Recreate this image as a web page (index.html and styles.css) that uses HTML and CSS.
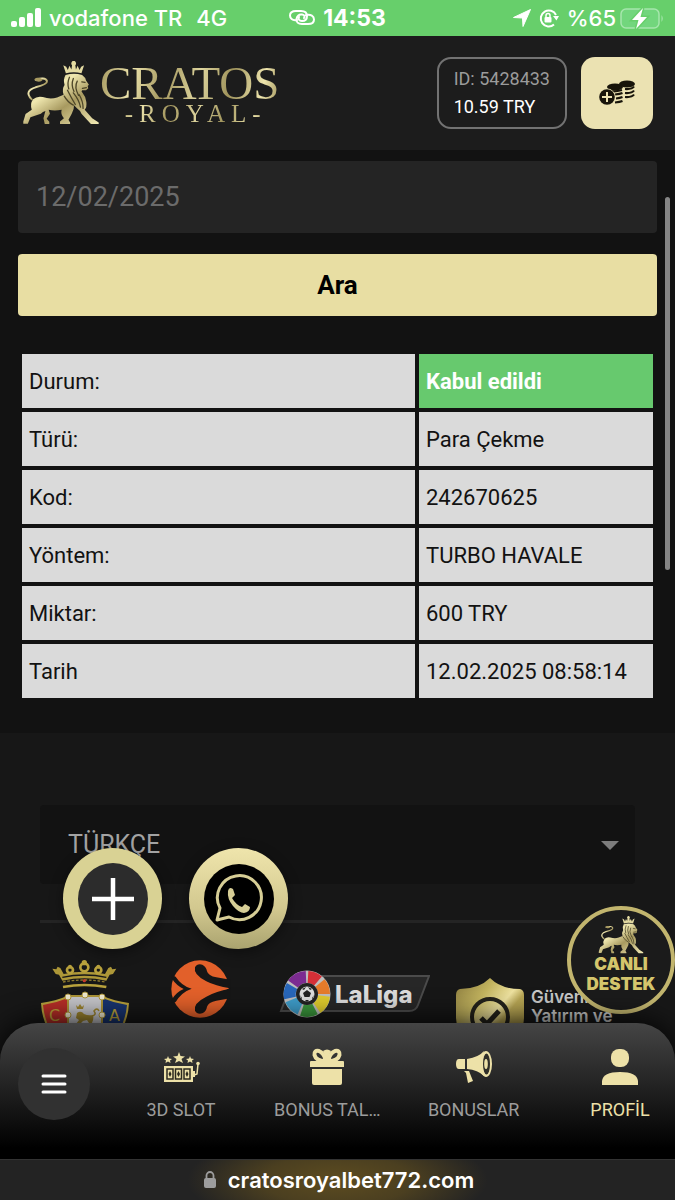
FILE: index.html
```html
<!DOCTYPE html>
<html lang="tr">
<head>
  <meta charset="UTF-8">
  <meta name="viewport" content="width=device-width, initial-scale=1.0">
  <title>Cratos Royal</title>
  <link rel="stylesheet" href="styles.css">
</head>
<body>

<!-- Shared drawings -->
<svg class="defs" width="0" height="0" aria-hidden="true">
  <defs>
    <linearGradient id="gold" x1="0" y1="0" x2="1" y2="1">
      <stop offset="0" stop-color="#8f8350"/>
      <stop offset="0.35" stop-color="#f0e8b0"/>
      <stop offset="0.6" stop-color="#a89a60"/>
      <stop offset="1" stop-color="#f2eab4"/>
    </linearGradient>
    <linearGradient id="shieldGold" x1="0" y1="0" x2="1" y2="1">
      <stop offset="0" stop-color="#85763b"/>
      <stop offset="0.3" stop-color="#c3b45f"/>
      <stop offset="0.5" stop-color="#eee2a0"/>
      <stop offset="0.6" stop-color="#b8a654"/>
      <stop offset="1" stop-color="#99873d"/>
    </linearGradient>
    <symbol id="lion" viewBox="20 15 240 195">
      <path d="M50 132C30 112 42 101 62 95C86 89 98 84 97 76C94 66 78 66 62 72" fill="none" stroke="url(#gold)" stroke-width="6" stroke-linecap="round"/>
      <path d="M58 70C66 62 80 66 84 72C78 80 64 80 58 70Z" fill="#a89a60"/>
      <path d="M147 27L155 52Q180 46 203 52L211 27L202 32L197 42L191 29L186 40L184 27A7 8 0 1 0 174 27L172 40L166 29L161 42L156 32Z" fill="#e4dba2"/>
      <path d="M154 57Q180 49 205 57Q215 64 217 74L226 87L222 91L224 98L217 104L205 104Q201 108 206 112Q217 125 218 140Q220 156 213 164L236 190L256 203V208H232L203 176Q198 165 190 160L180 150Q181 162 173 176L163 195L168 203V208H137V200L149 190Q138 178 142 164Q120 168 102 164L106 176L96 192L104 201V208H90L86 190L92 168Q84 170 78 176L46 187L38 207H24V200L31 177L50 164Q44 146 54 132Q66 121 84 125Q108 133 128 126L148 118Q142 100 151 88Q146 70 154 57Z" fill="url(#gold)"/>
      <path d="M166 64Q158 82 164 100M178 68Q170 88 180 108M190 76Q180 94 194 120M160 104Q172 128 184 148M178 112Q196 134 200 156M196 118Q208 138 208 160M204 78L214 80M206 98L218 96M150 122Q160 140 178 150" fill="none" stroke="#4d4628" stroke-width="4" stroke-linecap="round"/>
    </symbol>
  </defs>
</svg>

<div class="phone">

  <div class="status-bar">
    <div class="status-left">
      <svg width="30" height="20" viewBox="0 0 30 20" fill="#fff">
        <rect x="0" y="13" width="6" height="6" rx="2"/><rect x="8" y="9" width="6" height="10" rx="2"/>
        <rect x="16" y="5" width="6" height="14" rx="2"/><rect x="24" y="0" width="6" height="19" rx="2"/>
      </svg>
      <span>vodafone TR</span>
      <span class="network">4G</span>
    </div>
    <div class="status-time">
      <svg width="26" height="18" viewBox="0 0 26 18" fill="none" stroke="#fff" stroke-width="2" stroke-linecap="round">
        <path d="M8 11C3 12 1 9 1 6.500C1 3 4 2 7 2H12C16 2 18 4 18 7C18 10 16 12 13 12C10 12 9 10 10 8"/>
        <path d="M17 6C22 5 25 7 25 10.500C25 14 22 15 19 15H13C9 15 7 13 7.500 10C8 7 10 5 13 5.500C16 6 16 8 15 9"/>
      </svg>
      <span>14:53</span>
    </div>
    <div class="status-right">
      <svg width="18" height="18" viewBox="0 0 18 18" fill="#fff"><path d="M17.500.5L10 17.500L9.500 9L.5 8.500Z" stroke="#fff" stroke-linejoin="round"/></svg>
      <svg width="20" height="20" viewBox="0 0 20 20" fill="none" stroke="#fff" stroke-width="2">
        <path d="M15 16.500A8 8 0 1 1 17 7"/><path d="M14 8H20L17.500 12.500Z" fill="#fff" stroke="none"/>
        <rect x="5.500" y="9" width="7" height="5.500" rx="1" fill="#fff" stroke="none"/><path d="M7 9V7.500A2 2 0 0 1 11 7.500V9" stroke-width="1.500"/>
      </svg>
      <span>%65</span>
      <svg class="battery" width="44" height="24" viewBox="0 0 44 24">
        <rect x="1" y="3" width="38" height="19" rx="5" fill="#72d67d" stroke="#a6e6ad" stroke-width="1.500"/>
        <path d="M41.500 9Q44 12.500 41.500 16Z" fill="#a6e6ad"/>
        <path d="M23 2L12 14H18.500L16 23L27 11H20.500Z" fill="#fff" stroke="#67cf6b" stroke-width="3" paint-order="stroke"/>
      </svg>
    </div>
  </div>

  <header class="header">
    <a class="logo" href="#">
      <svg class="logo-lion" width="78" height="64"><use href="#lion"/></svg>
      <span class="logo-text">
        <span class="logo-name">CRATOS</span>
        <span class="logo-sub">-ROYAL-</span>
      </span>
    </a>
    <div class="account">
      <a class="balance" href="#">
        <span class="balance-id">ID: 5428433</span>
        <span>10.59 TRY</span>
      </a>
      <button class="deposit" aria-label="Para yatır">
        <svg width="36" height="26" viewBox="0 0 36 26">
          <g fill="#17140a">
            <ellipse cx="28" cy="4" rx="8" ry="3.500"/><ellipse cx="16" cy="7" rx="8" ry="3.500"/>
          </g>
          <g fill="none" stroke="#17140a" stroke-width="2.200">
            <path d="M35 6.500Q33 9.500 26 9M35 10.500Q33 13.500 26 13M35 14.500Q33 17.500 26 17"/>
            <path d="M8.500 9Q12 13 23 10M16 14.500Q21 14 23.500 13M17 18.500Q21 18 23.500 17M16 22.500Q21 22 23.500 21"/>
          </g>
          <circle cx="8" cy="17" r="8.500" fill="#ebe2b2"/><circle cx="8" cy="17" r="7.800" fill="#17140a"/>
          <path d="M8 12V22M3 17H13" stroke="#ebe2b2" stroke-width="2"/>
        </svg>
      </button>
    </div>
  </header>

  <main class="content">
    <section class="history">
      <input class="date-input" type="text" value="12/02/2025" aria-label="Tarih">
      <button class="search-button">Ara</button>
      <table class="details">
        <tr><th scope="row">Durum:</th><td class="accepted">Kabul edildi</td></tr>
        <tr><th scope="row">Türü:</th><td>Para Çekme</td></tr>
        <tr><th scope="row">Kod:</th><td>242670625</td></tr>
        <tr><th scope="row">Yöntem:</th><td>TURBO HAVALE</td></tr>
        <tr><th scope="row">Miktar:</th><td>600 TRY</td></tr>
        <tr><th scope="row">Tarih</th><td>12.02.2025 08:58:14</td></tr>
      </table>
    </section>

    <footer class="footer">
      <div class="select-wrap">
        <select class="language" aria-label="Dil">
          <option>TÜRKÇE</option>
        </select>
        <svg class="select-arrow" width="18" height="9" viewBox="0 0 18 9"><path d="M0 0H18L9 9Z" fill="#7c7c7c"/></svg>
      </div>
      <div class="partners">
        <svg width="90" height="90" viewBox="0 0 90 90">
          <g transform="translate(-5 -6) scale(0.3333)">
            <path d="M52 44L64 46L68 38L76 42L86 60Q148 46 210 60L220 42L228 38L232 46L244 44L234 60L224 62L214 80Q148 66 82 80L72 62L62 60Z" fill="#ad9738"/>
            <g fill="#171717" stroke="#b8a13c" stroke-width="8">
              <circle cx="148" cy="40" r="12"/><circle cx="105" cy="48" r="9"/><circle cx="190" cy="48" r="9"/>
            </g>
            <g fill="#b8a13c"><circle cx="148" cy="26" r="8"/><circle cx="105" cy="38" r="6"/><circle cx="190" cy="38" r="6"/></g>
            <path d="M82 70Q148 56 214 70" stroke="#171717" stroke-width="4" fill="none"/>
            <path d="M84 84Q148 72 212 84" stroke="#8d7a2e" stroke-width="4" stroke-dasharray="8 5" fill="none"/>
            <path d="M84 99Q148 87 214 99" stroke="#b8a13c" stroke-width="8" fill="none"/>
            <circle cx="148" cy="80" r="5" fill="#c53a2c"/>
          </g>
          <path d="M1 43Q16 41 27 36H63Q74 41 89 43Q88 66 72 84L45 90L18 84Q2 66 1 43Z" fill="#b8a13c"/>
          <path d="M3 45Q16 43 28 38V86L20 83Q5 67 3 45Z" fill="#b72e27"/>
          <path d="M87 45Q74 43 62 38V86L70 83Q85 67 87 45Z" fill="#18346f"/>
          <rect x="28" y="36" width="34" height="52" fill="#c5c5c9"/>
          <path d="M36 45L38 47L40 44L42 47L44 45L43 49H37Z" fill="#9c842e"/>
          <path d="M37 53Q41 50 44 54Q48 56 53 55Q54 59 52 63H49L47 60L43 61L40 64H36L39 60L36 58Z" fill="#9c842e"/>
          <path d="M52 56Q57 55 54 51Q57 47 59 51" stroke="#9c842e" stroke-width="1.500" fill="none"/>
          <path d="M28 36H62V88M28 36V88" fill="none" stroke="#ac9437" stroke-width="2"/>
          <g fill="#eee8cf" stroke="#ae963b"><circle cx="28" cy="37" r="3"/><circle cx="45" cy="35" r="3"/><circle cx="62" cy="37" r="3"/><circle cx="28" cy="55" r="3"/><circle cx="62" cy="55" r="3"/></g>
          <text class="crest-letter" x="9" y="61">C</text><text class="crest-letter" x="69" y="61">A</text>
        </svg>

        <svg width="88" height="58" viewBox="-23 16 264 174">
          <circle cx="109" cy="103" r="86" fill="#e2602a"/>
          <path id="swoosh" d="M94 38Q100 26 116 30Q128 36 130 50Q134 64 158 68L200 75V101Q154 94 128 80Q88 60 94 38Z" fill="#161616"/>
          <path d="M94 168Q100 180 116 176Q128 170 130 156Q134 142 158 138L200 131V101Q154 112 128 126Q88 146 94 168Z" fill="#161616"/>
          <path d="M22 60L36 66Q54 94 84 102Q54 112 36 142L22 146L25 134Q38 112 60 103Q38 92 25 72Z" fill="#161616"/>
          <path d="M150 94L196 102L150 110Z" fill="#e2602a"/>
        </svg>

        <svg width="160" height="58" viewBox="-10 -11 160 58">
          <path d="M20 5H149L138 34Q136 40 129 40H1L4 32Z" fill="#272727" stroke="#4b4b4b" stroke-width="2"/>
          <circle cx="27" cy="23" r="23.500" fill="#bdbdbd"/>
          <g fill="none" stroke-width="12">
            <path d="M28 6A17 17 0 0 1 38 10" stroke="#d52f37"/>
            <path d="M40 12A17 17 0 0 1 44 23" stroke="#e57b2a"/>
            <path d="M44 25A17 17 0 0 1 37 37" stroke="#dfcb2d"/>
            <path d="M35 38A17 17 0 0 1 22 39" stroke="#3a963c"/>
            <path d="M20 38A17 17 0 0 1 11 29" stroke="#3e9cc9"/>
            <path d="M10 27A17 17 0 0 1 12 15" stroke="#2866b9"/>
            <path d="M13 13A17 17 0 0 1 26 6" stroke="#7c2b91"/>
          </g>
          <circle cx="27" cy="23" r="11" fill="#222"/><circle cx="27" cy="23" r="7.500" fill="#dcdcdc"/>
          <path d="M27 19L31 22L29.500 26H24.500L23 22ZM22 18L26 16L24 19ZM32 18L28 16L30 19ZM20 24L22 27L22 29ZM34 24L32 27V29ZM25 29H29L27 31Z" fill="#222"/>
          <text class="laliga-text" x="55" y="32">LaLiga</text>
        </svg>

        <div class="secure">
          <svg width="68" height="80" viewBox="0 0 68 80">
            <path d="M34 0Q45 11 64 11Q68 12 68 17V40Q67 65 34 80Q1 65 0 40V17Q0 12 4 11Q23 11 34 0Z" fill="url(#shieldGold)"/>
            <circle cx="34" cy="39" r="18" fill="none" stroke="#24221b" stroke-width="4"/>
            <path d="M25 40L31 46L43 33" fill="none" stroke="#24221b" stroke-width="5"/>
          </svg>
          <span>Güvenli<br>Yatırım ve</span>
        </div>
      </div>
    </footer>
  </main>

  <div class="scroll-thumb"></div>

  <div class="float-buttons">
    <button class="float-button" aria-label="Ekle">
      <svg width="70" height="72" viewBox="0 0 70 72">
        <ellipse cx="35" cy="36" rx="35" ry="36" fill="#2c2c2c"/>
        <path d="M35 15V57M14 36H56" stroke="#fff" stroke-width="4.500"/>
      </svg>
    </button>
    <button class="float-button whatsapp" aria-label="WhatsApp">
      <svg width="70" height="72" viewBox="0 0 70 72">
        <ellipse cx="35" cy="36" rx="35" ry="35" fill="#000"/>
        <path d="M13 57L16 45A22 22 0 1 1 25 54Z" fill="none" stroke="#d7ce96" stroke-width="3" stroke-linejoin="round"/>
        <path d="M24 28Q25 23 29 26L31 32L28 35Q32 42 38 44L41 41L46 44Q46 49 40 50Q35 50 29 43Q23 36 24 28Z" fill="#d7ce96"/>
      </svg>
    </button>
  </div>

  <button class="support">
    <svg width="46" height="38"><use href="#lion"/></svg>
    <span>CANLI<br>DESTEK</span>
  </button>

  <nav class="bottom-nav">
    <button class="menu-button" aria-label="Menü">
      <svg width="26" height="20" viewBox="0 0 26 20"><path d="M2 2H24M2 10H24M2 18H24" stroke="#fff" stroke-width="3" stroke-linecap="round"/></svg>
    </button>
    <div class="nav-items">
      <a class="nav-item" href="#">
        <svg width="38" height="38" viewBox="0 0 38 38" fill="#ede1a8">
          <path d="M17 4L18.500 8L23 8.500L19.500 11L21 15L17 13L13 15L14.500 11L11 8.500L15.500 8Z"/>
          <path d="M6 8L7 10.500L10 11L8 12.500L8.500 15L6 13.500L3.500 15L4 12.500L2 11L5 10.500ZM28 8L29 10.500L32 11L30 12.500L30.500 15L28 13.500L25.500 15L26 12.500L24 11L27 10.500Z"/>
          <path d="M2 18H31V34H2ZM31 23H33V29H31Z"/>
          <path d="M32 27L35 26L36 16" fill="none" stroke="#ede1a8" stroke-width="1.500"/>
          <circle cx="36" cy="15.500" r="1.800"/>
          <g fill="none" stroke="#2b291f" stroke-width="1.500"><rect x="5" y="21" width="6" height="10"/><rect x="13.500" y="21" width="6" height="10"/><rect x="22" y="21" width="6" height="10"/></g>
          <path d="M8 23L9.500 26L8 29L6.500 26ZM16.500 23L18 26L16.500 29L15 26ZM25 23L26.500 26L25 29L23.500 26Z" fill="#2b291f"/>
        </svg>
        <span>3D SLOT</span>
      </a>
      <a class="nav-item" href="#">
        <svg width="38" height="38" viewBox="0 0 38 38" fill="#ede1a8">
          <path d="M4 21H34V35Q34 37 32 37H6Q4 37 4 35Z"/><path d="M3 13H35Q36 13 36 14V19H2V14Q2 13 3 13Z"/>
          <g fill="none" stroke="#ede1a8" stroke-width="4"><path d="M17 13Q8 13 6.500 7Q6 2 11 3Q16 5 18 13ZM21 13Q30 13 31.500 7Q32 2 27 3Q22 5 20 13Z"/></g>
          <path d="M15 3Q19 0 23 3L19 12Z"/>
        </svg>
        <span>BONUS TAL…</span>
      </a>
      <a class="nav-item" href="#">
        <svg width="38" height="38" viewBox="0 0 38 38" fill="#ede1a8">
          <path d="M10 11V21H4Q1 21 1 16Q1 11 4 11ZM12 11Q24 9 29 3Q25 15 29 28Q23 22 12 21ZM9 23H14L18 33L13 35L11 25Z"/>
          <ellipse cx="31" cy="16" rx="6" ry="13"/><ellipse cx="31.500" cy="16" rx="3.500" ry="10.500" fill="#302f29"/><ellipse cx="31" cy="16" rx="1.800" ry="5"/>
        </svg>
        <span>BONUSLAR</span>
      </a>
      <a class="nav-item active" href="#">
        <svg width="38" height="38" viewBox="0 0 38 38" fill="#ede1a8">
          <rect x="10" y="1" width="18" height="18" rx="8"/><path d="M1 37V33Q2 24 19 24Q36 24 37 33V37Z"/>
        </svg>
        <span>PROFİL</span>
      </a>
    </div>
  </nav>

  <div class="url-bar">
    <svg width="12" height="18" viewBox="0 0 12 18"><rect x="0" y="7" width="12" height="10" rx="2" fill="#9d9d9d"/><path d="M2.500 8V4.500A3.500 3.500 0 0 1 9.500 4.500V8" fill="none" stroke="#9d9d9d" stroke-width="1.800"/></svg>
    <span>cratosroyalbet772.com</span>
  </div>
</div>

</body>
</html>
```

FILE: styles.css
```css
* {
  box-sizing: border-box;
}

body {
  margin: 0;
  background-color: #121212;
  color: #fff;
  font-family: Roboto, "Liberation Sans", sans-serif;
}

button {
  border: none;
  padding: 0;
  font-family: inherit;
  cursor: pointer;
}

a {
  color: inherit;
  text-decoration: none;
}

svg {
  flex-shrink: 0;
}

.defs {
  position: absolute;
}

.phone {
  position: relative;
  display: flex;
  flex-direction: column;
  height: 100vh;
  overflow: hidden;
}

/* Status bar */
.status-bar {
  display: grid;
  grid-template-columns: 1fr auto 1fr;
  align-items: center;
  flex-shrink: 0;
  height: 36px;
  padding: 0 11px;
  background-color: #67cf6b;
  font-family: Inter, sans-serif;
  font-size: 22px;
  font-weight: 500;
}

.status-left,
.status-time,
.status-right {
  display: flex;
  align-items: center;
  gap: 8px;
}

.network {
  margin-left: 6px;
}

.status-time {
  font-size: 23px;
  font-weight: 700;
}

.status-right {
  justify-content: flex-end;
}

.battery {
  margin-left: -4px;
}

/* Header */
.header {
  display: flex;
  justify-content: space-between;
  align-items: center;
  flex-shrink: 0;
  height: 114px;
  padding: 0 22px;
  background-color: #1c1c1c;
}

.logo {
  display: flex;
  align-items: center;
}

.logo-text {
  display: flex;
  flex-direction: column;
  align-items: center;
  padding-top: 4px;
  font-family: "Liberation Serif", serif;
}

.logo-name,
.logo-sub {
  background: linear-gradient(100deg, #a3965e, #ece3ab 18%, #a3965e 36%, #ddd49d 55%, #9f935b 72%, #eee5ad 90%, #a3965e);
  background-clip: text;
  -webkit-background-clip: text;
  color: transparent;
}

.logo-name {
  font-size: 47px;
  line-height: 38px;
}

.logo-sub {
  padding-left: 12px;
  font-size: 25px;
  line-height: 24px;
  letter-spacing: 6px;
}

.account {
  display: flex;
  gap: 14px;
}

.balance {
  display: flex;
  flex-direction: column;
  justify-content: center;
  height: 72px;
  padding: 0 15px;
  border: 2px solid #727272;
  border-radius: 14px;
  font-size: 18px;
  line-height: 28px;
}

.balance-id {
  color: #9b9b9b;
}

.deposit {
  display: flex;
  justify-content: center;
  align-items: center;
  width: 72px;
  height: 72px;
  border-radius: 14px;
  background-color: #ebe2b2;
}

/* Transaction history */
.content {
  flex: 1;
  min-height: 0;
  overflow: hidden;
}

.history {
  display: flex;
  flex-direction: column;
  padding: 11px 18px 31px;
  background-color: #121212;
}

.date-input {
  width: 100%;
  height: 72px;
  padding: 0 18px;
  border: none;
  border-radius: 4px;
  background-color: #242424;
  color: #6b6b6b;
  font-family: inherit;
  font-size: 27px;
}

.search-button {
  height: 62px;
  margin: 21px 0 34px;
  border-radius: 4px;
  background-color: #e8dea3;
  color: #000;
  font-size: 26px;
  font-weight: 700;
}

.details {
  width: 100%;
  border-collapse: separate;
  border-spacing: 4px;
  font-size: 22px;
}

.details th,
.details td {
  height: 54px;
  padding: 0 7px;
  background-color: #dadada;
  color: #121212;
  font-weight: 400;
  text-align: left;
}

.details td {
  width: 234px;
}

.details .accepted {
  background-color: #67c96e;
  color: #fff;
  font-weight: 700;
}

/* Footer */
.footer {
  padding: 72px 40px 0;
  background-color: #171717;
}

.select-wrap {
  position: relative;
  padding-bottom: 36px;
  border-bottom: 3px solid #242424;
}

.language {
  display: block;
  width: 100%;
  height: 79px;
  padding: 0 28px;
  border: none;
  border-radius: 4px;
  background-color: #121212;
  color: #a3a3a3;
  font-family: inherit;
  font-size: 25px;
  appearance: none;
}

.select-arrow {
  position: absolute;
  top: 36px;
  right: 16px;
}

.partners {
  display: flex;
  gap: 26px;
  align-items: flex-start;
  padding-top: 37px;
}

.laliga-text {
  fill: #dcdcdc;
  font-family: Inter, sans-serif;
  font-size: 24px;
  font-weight: 800;
}

.crest-letter {
  fill: #bda238;
  font-family: "DejaVu Sans", sans-serif;
  font-size: 16px;
}

.secure {
  display: flex;
  gap: 7px;
  padding-top: 18px;
  color: #c8c8c8;
  font-family: Inter, sans-serif;
  font-size: 17px;
  font-weight: 600;
  line-height: 19px;
  white-space: nowrap;
}

.secure span {
  padding-top: 10px;
}

/* Overlays */
.scroll-thumb {
  position: absolute;
  top: 197px;
  right: 5px;
  width: 5px;
  height: 373px;
  border-radius: 3px;
  background-color: #858585;
}

.float-buttons {
  position: absolute;
  bottom: 251px;
  left: 63px;
  display: flex;
  gap: 27px;
}

.float-button {
  display: flex;
  justify-content: center;
  align-items: center;
  width: 99px;
  height: 101px;
  border-radius: 50%;
  background-color: #d9d294;
  box-shadow: 0 4px 14px rgba(0, 0, 0, 0.4);
}

.whatsapp {
  background: linear-gradient(#efe5ac, #d2c88f 60%, #aaa36f);
}

.support {
  position: absolute;
  right: 0;
  bottom: 186px;
  display: flex;
  flex-direction: column;
  align-items: center;
  width: 108px;
  height: 108px;
  padding-top: 6px;
  border: 4px solid #c2b56e;
  border-radius: 50%;
  background-color: #1b1b1b;
  color: #d4c56c;
  font-family: Inter, sans-serif;
  font-size: 17px;
  font-weight: 900;
  line-height: 20px;
}

/* Bottom navigation */
.bottom-nav {
  position: absolute;
  right: 0;
  bottom: 41px;
  left: 0;
  display: flex;
  gap: 36px;
  height: 136px;
  padding: 25px 0 0 18px;
  border-radius: 38px 38px 0 0;
  background: linear-gradient(#454545, #000 92%);
  box-shadow: 0 0 30px #000;
}

.menu-button {
  display: flex;
  justify-content: center;
  align-items: center;
  flex-shrink: 0;
  width: 72px;
  height: 72px;
  border-radius: 50%;
  background-color: #313131;
}

.nav-items {
  display: flex;
  justify-content: space-between;
  flex: 1;
}

.nav-item {
  display: flex;
  flex-direction: column;
  align-items: center;
  gap: 12px;
  width: 110px;
  color: #9c9c9c;
  font-size: 18px;
  line-height: 24px;
  white-space: nowrap;
}

.nav-item.active {
  color: #ede1a8;
}

.url-bar {
  position: absolute;
  right: 0;
  bottom: 0;
  left: 0;
  display: flex;
  justify-content: center;
  align-items: center;
  gap: 12px;
  height: 41px;
  padding-left: 3px;
  border-top: 1px solid #333;
  background: radial-gradient(ellipse 150px 50px at 50% 50%, #5d4c20, #4b3f20 50%, #232323);
  font-family: Inter, sans-serif;
  font-size: 22px;
  font-weight: 600;
}
```
